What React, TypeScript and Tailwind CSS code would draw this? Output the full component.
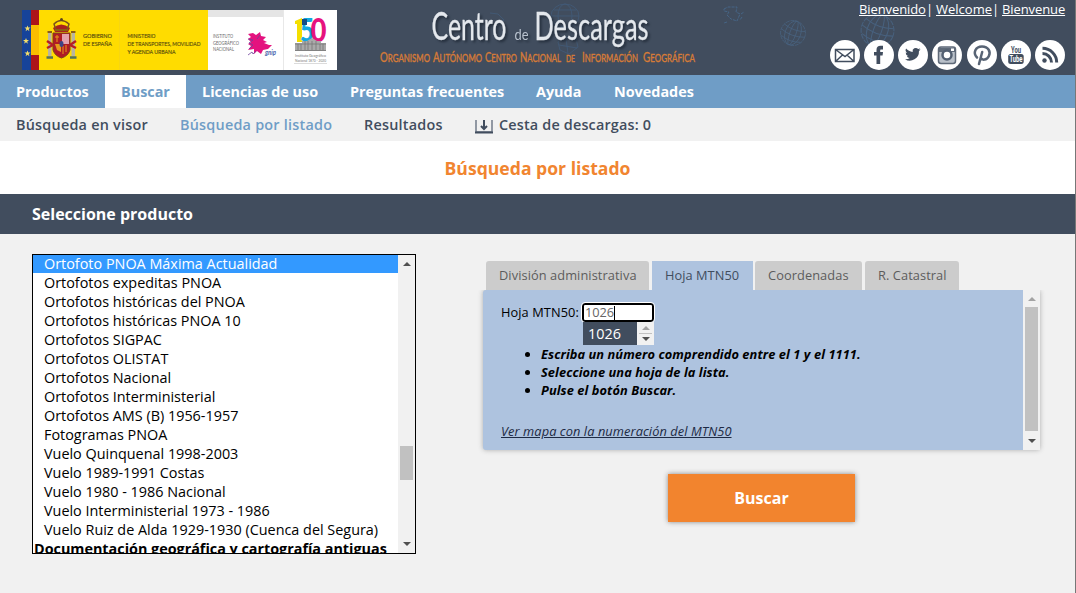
import React from "react";

const products = [
  "Ortofotos expeditas PNOA",
  "Ortofotos históricas del PNOA",
  "Ortofotos históricas PNOA 10",
  "Ortofotos SIGPAC",
  "Ortofotos OLISTAT",
  "Ortofotos Nacional",
  "Ortofotos Interministerial",
  "Ortofotos AMS (B) 1956-1957",
  "Fotogramas PNOA",
  "Vuelo Quinquenal 1998-2003",
  "Vuelo 1989-1991 Costas",
  "Vuelo 1980 - 1986 Nacional",
  "Vuelo Interministerial 1973 - 1986",
  "Vuelo Ruiz de Alda 1929-1930 (Cuenca del Segura)",
];

function Star({ x, y }: { x: number; y: number }) {
  return (
    <path
      transform={`translate(${x} ${y})`}
      d="M0-3 .8-.9 3-.9 1.2.5 1.9 2.7 0 1.3-1.9 2.7-1.2.5-3-.9-.8-.9Z"
      fill="#f4df6a"
    />
  );
}

function Logos() {
  return (
    <svg width="315" height="60" viewBox="0 0 315 60" fontFamily="Lato, sans-serif" className="block">
      <rect width="315" height="60" fill="#fff" />
      <rect width="9" height="60" fill="#16439a" />
      <Star x={5.5} y={18.5} />
      <Star x={4} y={31} />
      <Star x={5.5} y={43.5} />
      <rect x="9" width="8" height="60" fill="#ad1519" />
      <rect x="9" y="15" width="8" height="30" fill="#fabd00" />
      <rect x="17" width="169" height="60" fill="#ffdc00" />
      <path d="M97.500 0V60" stroke="#f0d020" strokeWidth=".5" />
      {/* coat of arms */}
      <g>
        <path d="M31 18q8-7 17 0l-2 4H33Z" fill="#a9231d" />
        <path d="M32 14q7-7 15 0l-2 6H34Z" fill="none" stroke="#7c521b" strokeWidth="1.500" />
        <circle cx="39.500" cy="9.500" r="1.500" fill="#5d451f" />
        <path d="M33 20h13" stroke="#8d5d13" strokeWidth="2" />
        <path d="M31 23H48V40q-2 6-8.500 8Q33 46 31 40Z" fill="#b01c25" stroke="#7a421e" />
        <path d="M40 24h7v10h-7Z" fill="#e4a0ae" />
        <path d="M33 34h6v8l-4-2Z" fill="#e79a1c" />
        <path d="M35 25v7M33 27h4M41 36v8M44 35v7" stroke="#e79a1c" strokeWidth="1" />
        <ellipse cx="39.500" cy="34" rx="2" ry="3" fill="#3d4584" />
        <rect x="26" y="23" width="3.500" height="23" fill="#b8b4a0" />
        <rect x="49.500" y="23" width="3.500" height="23" fill="#b8b4a0" />
        <path d="M25 31l6 4M25 38l6-3M48 35l6-4M48 35l6 3" stroke="#b51e25" strokeWidth="2.500" />
        <path d="M25.500 22h4.500M49 22h4.500" stroke="#8d5d13" strokeWidth="2" />
        <path d="M24.500 47.500h6.500M48 47.500h6.500" stroke="#53705a" strokeWidth="2.500" />
      </g>
      <g fill="#65570d" stroke="#65570d" strokeWidth=".2" fontSize="6.500">
        <text x="61" y="27.800" textLength="29" lengthAdjust="spacingAndGlyphs">GOBIERNO</text>
        <text x="61" y="35.800" textLength="29" lengthAdjust="spacingAndGlyphs">DE ESPAÑA</text>
        <text x="105.500" y="27.800" textLength="28" lengthAdjust="spacingAndGlyphs">MINISTERIO</text>
        <text x="105.500" y="35.800" textLength="73" lengthAdjust="spacingAndGlyphs">DE TRANSPORTES, MOVILIDAD</text>
        <text x="105.500" y="43.800" textLength="48" lengthAdjust="spacingAndGlyphs">Y AGENDA URBANA</text>
      </g>
      <rect x="186" width="75" height="7" fill="#e5e5e5" />
      <path d="M261.500 0V60" stroke="#e8e8e8" />
      <g fill="#666" fontSize="5.500">
        <text x="191" y="28" textLength="20" lengthAdjust="spacingAndGlyphs">INSTITUTO</text>
        <text x="191" y="34.700" textLength="26" lengthAdjust="spacingAndGlyphs">GEOGRÁFICO</text>
        <text x="191" y="41.400" textLength="21" lengthAdjust="spacingAndGlyphs">NACIONAL</text>
      </g>
      <path d="M226 24l5-1 3 2 4-3 1 4 5 1-3 3 4 2-3 1 5 2 3 0-4 4-5 1-2 4-4-3-3 3 0-5-6 1 3-4-3-2 3-2-3-3 3-2Z" fill="#e4127f" />
      <path d="M226 29l5 1-4 3 4 2-4 4M226 45l4-3 1 2 3-3M238 25l-3 4" fill="none" stroke="#6e439c" strokeWidth=".8" />
      <text x="243" y="45" fontSize="8" fontStyle="italic" fontWeight="700" fill="#4b65ad" textLength="11" lengthAdjust="spacingAndGlyphs">gnip</text>
      {/* anniversary emblem */}
      <path d="M273 11l7-3v24h-5V14h-2Z" fill="#f4df00" />
      <text x="278" y="32" fontSize="33" fontWeight="900" fill="#12a9df" textLength="14" lengthAdjust="spacingAndGlyphs">5</text>
      <text x="288.500" y="32" fontSize="33" fontWeight="900" fill="#e6137e" textLength="16" lengthAdjust="spacingAndGlyphs">0</text>
      <path d="M280 9h5v6h-5Z" fill="#164d88" />
      <path d="M273 33h7v-2h5l5-3 5 3h4v2h5v8h-31Z" fill="#aaa" />
      <path d="M273 34h31M273 40.500h31M276 34v6M279 34v6M283 31v9M286 31v9M290 31v9M294 31v9M298 34v6M301 34v6" stroke="#777" strokeWidth=".8" />
      <g fill="#777" fontSize="4.200">
        <text x="273" y="46.500" textLength="31" lengthAdjust="spacingAndGlyphs">Instituto Geográfico</text>
        <text x="273" y="51.700" textLength="31" lengthAdjust="spacingAndGlyphs">Nacional 1870 - 2020</text>
      </g>
      <path d="M272 53.500h33" stroke="#ccc" strokeWidth=".7" />
    </svg>
  );
}

function Globe({ className }: { className: string }) {
  return (
    <svg viewBox="0 0 36 36" className={className} fill="none" stroke="#4a6889" strokeWidth="1" opacity=".75">
      <g transform="rotate(20 18 18)">
        <circle cx="18" cy="18" r="16" strokeDasharray="5 1" />
        <ellipse cx="18" cy="18" rx="10" ry="16" />
        <ellipse cx="18" cy="18" rx="4" ry="16" />
        <path d="M2 18q16 6 32 0M4 11q14 5 28 0M5 26q13 5 26 0" />
      </g>
    </svg>
  );
}

function Title() {
  return (
    <svg width="330" height="75" viewBox="0 0 330 75" className="block" fontFamily="Lato, sans-serif">
      <g fill="none" stroke="#42658b" strokeWidth=".8" opacity=".6">
        <ellipse cx="189" cy="16" rx="14" ry="12" />
        <ellipse cx="189" cy="16" rx="7" ry="12" />
        <path d="M175 16h28M178 10h22M182 42q4-8 18-3l2 8-9 7-9-4ZM190 38l2 16M183 45l18 3M114 13l8 1 6 6-5 4" />
      </g>
      <g style={{ filter: "drop-shadow(2px 2px 1px #26303e)" }} fill="#e4e8ed" stroke="#e4e8ed" strokeWidth=".3">
        <text x="55.500" y="39.500" fontSize="38" textLength="75" lengthAdjust="spacingAndGlyphs">Centro</text>
        <text x="138.500" y="39.500" fontSize="16" textLength="14" lengthAdjust="spacingAndGlyphs" fill="#b8c2ce" stroke="none">de</text>
        <text x="158.500" y="39.500" fontSize="38" textLength="114" lengthAdjust="spacingAndGlyphs">Descargas</text>
      </g>
      <g fill="#d57b38" stroke="#d57b38" strokeWidth=".4" fontSize="10.500">
        <text x="4" y="61.500" textLength="50" lengthAdjust="spacingAndGlyphs"><tspan fontSize="13">O</tspan>RGANISMO</text>
        <text x="57" y="61.500" textLength="49" lengthAdjust="spacingAndGlyphs"><tspan fontSize="13">A</tspan>UTÓNOMO</text>
        <text x="109" y="61.500" textLength="32" lengthAdjust="spacingAndGlyphs"><tspan fontSize="13">C</tspan>ENTRO</text>
        <text x="144" y="61.500" textLength="41" lengthAdjust="spacingAndGlyphs"><tspan fontSize="13">N</tspan>ACIONAL</text>
        <text x="190" y="61.500" fontSize="9" textLength="9" lengthAdjust="spacingAndGlyphs">DE</text>
        <text x="206" y="61.500" textLength="56" lengthAdjust="spacingAndGlyphs"><tspan fontSize="13">I</tspan>NFORMACIÓN</text>
        <text x="267" y="61.500" textLength="52" lengthAdjust="spacingAndGlyphs"><tspan fontSize="13">G</tspan>EOGRÁFICA</text>
      </g>
    </svg>
  );
}

const dark = "#414d5e";

function Social({ children }: { children: React.ReactNode }) {
  return (
    <a className="block size-[30px] rounded-full bg-white">
      <svg viewBox="0 0 30 30" className="size-[30px]" fill="none" stroke={dark}>
        {children}
      </svg>
    </a>
  );
}

function SocialIcons() {
  return (
    <div className="flex w-[235px] justify-between">
      <Social>
        <path d="M5.500 9.500h18.500v12H5.500ZM5.500 9.500l9.500 7 9-7M5.500 21.500l7-6.500M24 21.500l-7-6.500" strokeWidth="1.500" />
      </Social>
      <Social>
        <path d="M12.500 24v-8.500H10V12h2.500V9.800C12.500 7 14 5.800 16.500 5.800H19v3.600h-1.700c-1 0-1.100.5-1.100 1.300V12h2.800l-.4 3.500h-2.400V24Z" fill={dark} stroke="none" />
      </Social>
      <Social>
        <path transform="translate(7 6.500) scale(.65)" d="M24 4.600a10 10 0 0 1-2.800.8 5 5 0 0 0 2.200-2.700c-1 .6-2 1-3.200 1.200a4.900 4.900 0 0 0-8.400 4.500C7.700 8.200 4.100 6.200 1.700 3.200a4.900 4.900 0 0 0 1.500 6.500c-.8 0-1.600-.2-2.200-.6a4.900 4.900 0 0 0 3.900 4.900c-.7.200-1.500.2-2.200.1a4.900 4.900 0 0 0 4.600 3.400A9.900 9.900 0 0 1 0 19.500 14 14 0 0 0 21.500 7c1-.7 1.800-1.500 2.500-2.400Z" fill={dark} stroke="none" />
      </Social>
      <Social>
        <rect x="6.500" y="7" width="17" height="16.500" rx="2.500" fill="#b9c0c9" stroke="#5f6a79" strokeWidth="1.500" />
        <path d="M7 8h16v4H7Z" fill="#5f6a79" stroke="none" />
        <rect x="19" y="8.500" width="3" height="2.500" fill="#fff" stroke="none" />
        <circle cx="15" cy="15" r="4.500" fill="#fff" strokeWidth="2.500" stroke="#536072" />
      </Social>
      <Social>
        <path d="M12 24l3.200-12M10 17.500C5.500 13 8.500 6.500 15 6.500s9 5.500 6.800 9.700c-2 4.200-6.700 4.300-8.100 1.700" stroke="#586475" strokeWidth="2.500" strokeLinecap="round" />
      </Social>
      <Social>
        <g fill={dark} stroke="none" fontFamily="Roboto, sans-serif" fontWeight="700">
          <text x="10" y="12.800" fontSize="9.500" textLength="10" lengthAdjust="spacingAndGlyphs">You</text>
          <rect x="7.200" y="14" width="15.500" height="10" rx="2.500" />
          <text x="8.500" y="22.300" fontSize="8.500" fill="#fff" textLength="13" lengthAdjust="spacingAndGlyphs">Tube</text>
        </g>
      </Social>
      <Social>
        <circle cx="9.500" cy="20.500" r="2.200" fill={dark} stroke="none" />
        <path d="M7.500 13.500a9 9 0 0 1 9 9M7.500 8.300A14.200 14.200 0 0 1 21.700 22.500" strokeWidth="3" />
      </Social>
    </div>
  );
}

function Arrow({ down = false, muted = false }: { down?: boolean; muted?: boolean }) {
  return (
    <svg width="8" height="4" viewBox="0 0 8 4" className="block" fill={muted ? "#a3a3a3" : "#505050"}>
      {down ? <path d="M0 0h8L4 4Z" /> : <path d="M0 4h8L4 0Z" />}
    </svg>
  );
}

export default function App() {
  return (
    <div className="flex h-[593px] w-[1076px] overflow-hidden bg-[#f1f1f1] font-['Open_Sans',sans-serif] text-black">
      <div className="flex w-[1075px] flex-col">
        <header className="relative flex h-[75px] shrink-0 bg-[#414d5e]">
          <div className="mt-[10px] ml-[22px]"><Logos /></div>
          <div className="ml-[39px]"><Title /></div>
          <svg className="absolute top-[5px] left-[722px] h-[20px] w-[24px]" viewBox="0 0 24 20" fill="none" stroke="#466586" strokeDasharray="3 1">
            <path d="M2 4l4-2h9l-1 5 4 2-3 7-6-2-4-4 2-3-5-1ZM19 9l3-2M5 17l-3 1M20 12l-2 3" />
          </svg>
          <Globe className="absolute top-[19px] left-[779px] size-[28px]" />
          <Globe className="absolute top-[12px] left-[859px] size-[37px]" />
          <div className="relative ml-auto flex flex-col items-end pr-[10px]">
            <div className="flex h-[40px] pt-px text-[13px] leading-[17px] whitespace-pre text-white">
              <a className="w-[67px] tracking-[-0.1px] underline">Bienvenido</a><span className="w-[10px]">|</span>
              <a className="w-[56px] underline">Welcome</a><span className="w-[10px]">|</span>
              <a className="w-[63px] tracking-[-0.1px] underline">Bienvenue</a>
            </div>
            <SocialIcons />
          </div>
        </header>

        <nav className="flex h-[33px] shrink-0 bg-[#6f9dc6] text-[14.4px] leading-[33px] font-bold whitespace-nowrap text-white">
          <a className="w-[105px] pl-4">Productos</a>
          <a className="w-[81px] bg-white pl-4 text-[#6f9dc6]">Buscar</a>
          <a className="w-[148px] pl-4">Licencias de uso</a>
          <a className="w-[186px] pl-4">Preguntas frecuentes</a>
          <a className="w-[78px] pl-4">Ayuda</a>
          <a className="pl-4">Novedades</a>
        </nav>
        <nav className="flex h-[33px] shrink-0 bg-[#f1f1f1] text-[14.4px] leading-[33px] font-semibold tracking-[0.23px] whitespace-nowrap text-[#414d5e]">
          <a className="w-[164px] pl-4">Búsqueda en visor</a>
          <a className="w-[184px] pl-4 text-[#6f9dc6]">Búsqueda por listado</a>
          <a className="w-[111px] pl-4">Resultados</a>
          <a className="flex pl-4">
            <svg width="18" height="16" viewBox="0 0 18 16" className="mt-[10px] mr-[6px] block" fill="none" stroke={dark} strokeWidth="1.500">
              <path d="M1 2v12h16V2" stroke="#717b89" />
              <path d="M0 14.500h18" strokeWidth="2" />
              <path d="M9 2v9M6 8l3 3 3-3" strokeWidth="2" />
            </svg>
            <span className="tracking-[0.18px]">Cesta de descargas: 0</span>
          </a>
        </nav>

        <h1 className="h-[53px] shrink-0 bg-white text-center text-[17.600px] leading-[54px] font-bold text-[#f18530]">
          Búsqueda por listado
        </h1>
        <h2 className="h-[40px] shrink-0 bg-[#414d5e] pl-8 text-[16px] leading-[40px] font-bold text-white">
          Seleccione producto
        </h2>

        <main className="flex flex-1 items-start">
          <div className="mt-5 ml-8 flex h-[300px] w-[384px] border border-black bg-white">
            <ul className="h-full flex-1 overflow-hidden text-[14.4px] leading-[19px] whitespace-nowrap">
              <li className="h-[18px] bg-[#3399ff] pl-[11px] leading-[18px] text-white">Ortofoto PNOA Máxima Actualidad</li>
              {products.map((p) => (
                <li key={p} className="h-[19px] pl-[11px]">{p}</li>
              ))}
              <li className="pl-px font-bold tracking-[-0.02px]">Documentación geográfica y cartografía antiguas</li>
            </ul>
            <div className="flex w-[17px] flex-col items-center bg-[#f1f1f1]">
              <div className="flex h-[191px] items-start pt-[7px]"><Arrow /></div>
              <div className="h-[34px] w-[13px] bg-[#c1c1c1]" />
              <div className="mt-auto pb-[7px]"><Arrow down /></div>
            </div>
          </div>

          <div className="mt-[27px] ml-[67px] w-[557px]">
            <div className="flex h-[29px] gap-[3px] pl-[3px] text-[12.8px] leading-[29px] whitespace-nowrap text-[#5c5c5c]">
              <a className="w-[163px] rounded-t-[3px] bg-[#ccc] pl-[13px] tracking-[0.08px]">División administrativa</a>
              <a className="w-[101px] bg-[#aec3df] pl-[13px] tracking-[0.05px] text-[#414d5e]">Hoja MTN50</a>
              <a className="-ml-px w-[107px] rounded-t-[3px] bg-[#ccc] pl-[13px] tracking-[0.08px]">Coordenadas</a>
              <a className="w-[94px] rounded-t-[3px] bg-[#ccc] pl-[13px] tracking-[0.08px]">R. Catastral</a>
            </div>
            <div className="flex h-[160px] rounded-[3px] bg-[#aec3df] shadow-[0_0_5px_#aaa] [clip-path:inset(0_-6px_-6px_-6px)]">
              <div className="flex-1 pt-[13px] pl-[18px] text-[12.8px]">
                <div className="flex h-[19px] leading-[19px]">
                  <label className="w-[81px] tracking-[0.08px] whitespace-nowrap">Hoja MTN50:</label>
                  <div className="flex h-[19px] w-[72px] items-center rounded-[3px] border-2 border-black bg-white pl-px leading-[15px] tracking-[-0.1px] text-[#666] outline outline-white">
                    1026<span className="h-[14px] w-px bg-black" />
                  </div>
                </div>
                <div className="ml-[82px] flex h-[23px] w-[71px]">
                  <div className="w-[54px] bg-[#414d5e] pl-[5px] text-[14.4px] leading-[24px] text-white">1026</div>
                  <div className="flex w-[17px] flex-col items-center justify-center gap-[3px] bg-[#f1f1f1]">
                    <Arrow muted />
                    <div className="h-px w-[13px] bg-[#c1c1c1]" />
                    <Arrow down />
                  </div>
                </div>
                <ul className="list-disc pl-[40px] text-[12.8px] leading-[18px] font-bold tracking-[0.08px] italic">
                  <li>Escriba un número comprendido entre el 1 y el 1111.</li>
                  <li>Seleccione una hoja de la lista.</li>
                  <li>Pulse el botón Buscar.</li>
                </ul>
                <a className="mt-[23px] inline-block leading-[18px] tracking-[0.08px] text-[#1d2a44] italic underline">Ver mapa con la numeración del MTN50</a>
              </div>
              <div className="flex w-[17px] flex-col items-center bg-[#f1f1f1]">
                <div className="h-[17px] pt-[7px]"><Arrow muted /></div>
                <div className="h-[124px] w-[13px] bg-[#c1c1c1]" />
                <div className="mt-auto pb-[7px]"><Arrow down /></div>
              </div>
            </div>
            <button className="mt-[24px] ml-[185px] block h-[48px] w-[187px] bg-[#f2842e] text-[16px] font-bold text-white shadow-[0_0_5px_#888]">
              Buscar
            </button>
          </div>
        </main>
      </div>
      <div className="w-px bg-[#777]" />
    </div>
  );
}
